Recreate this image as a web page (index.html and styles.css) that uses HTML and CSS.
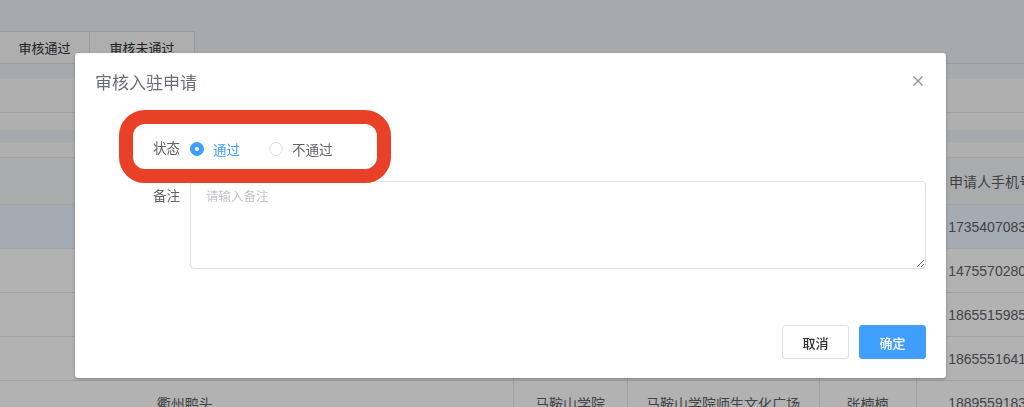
FILE: index.html
```html
<!DOCTYPE html>
<html lang="zh-CN">

<head>
    <meta charset="UTF-8">
    <meta name="viewport" content="width=device-width, initial-scale=1.0">
    <title>审核入驻申请</title>
    <link rel="stylesheet" href="styles.css">
</head>

<body>
    <div class="page">
        <div class="tabs">
            <div class="tab">审核通过</div>
            <div class="tab tab-wide">审核未通过</div>
        </div>

        <div class="filter-panel">
            <div class="filter-row"></div>
            <div class="filter-row filter-row-small"></div>
        </div>

        <div class="table-wrap">
            <table class="data-table">
                <colgroup>
                    <col class="w-name">
                    <col class="w-school">
                    <col class="w-address">
                    <col class="w-person">
                    <col class="w-phone">
                </colgroup>
                <thead>
                    <tr>
                        <th class="col-name"></th>
                        <th></th>
                        <th></th>
                        <th></th>
                        <th>申请人手机号</th>
                    </tr>
                </thead>
                <tbody>
                    <tr class="current-row">
                        <td class="col-name"></td>
                        <td></td>
                        <td></td>
                        <td></td>
                        <td>17354070832</td>
                    </tr>
                    <tr>
                        <td class="col-name"></td>
                        <td></td>
                        <td></td>
                        <td></td>
                        <td>14755702803</td>
                    </tr>
                    <tr>
                        <td class="col-name"></td>
                        <td></td>
                        <td></td>
                        <td></td>
                        <td>18655159859</td>
                    </tr>
                    <tr>
                        <td class="col-name"></td>
                        <td></td>
                        <td></td>
                        <td></td>
                        <td>18655516417</td>
                    </tr>
                    <tr>
                        <td class="col-name">衢州鸭头</td>
                        <td>马鞍山学院</td>
                        <td>马鞍山学院师生文化广场</td>
                        <td>张楠楠</td>
                        <td>18895591831</td>
                    </tr>
                </tbody>
            </table>
        </div>
    </div>

    <!-- dialog -->
    <div class="mask"></div>
    <div class="dialog">
        <div class="dialog-header">
            <span class="dialog-title">审核入驻申请</span>
            <button class="dialog-close" type="button">
                <svg width="10" height="10" viewBox="0 0 10 10">
                    <path d="M0.5 0.5 L9.5 9.5 M9.5 0.5 L0.5 9.5" stroke="#909399" stroke-width="1.3" fill="none" />
                </svg>
            </button>
        </div>

        <div class="dialog-body">
            <div class="form-item">
                <label class="form-label">状态</label>
                <div class="form-content radio-group">
                    <label class="radio is-checked">
                        <span class="radio-inner"></span>
                        <span class="radio-label">通过</span>
                    </label>
                    <label class="radio">
                        <span class="radio-inner"></span>
                        <span class="radio-label">不通过</span>
                    </label>
                </div>
            </div>
            <div class="form-item">
                <label class="form-label">备注</label>
                <div class="form-content">
                    <textarea class="textarea" placeholder="请输入备注"></textarea>
                </div>
            </div>
        </div>

        <div class="dialog-footer">
            <button class="btn" type="button">取消</button>
            <button class="btn btn-primary" type="button">确定</button>
        </div>

        <!-- red highlight drawn on the screenshot -->
        <div class="highlight-mark"></div>
    </div>
</body>

</html>
```

FILE: styles.css
```css
body {
    margin: 0;
    overflow: hidden;
    background-color: #f1f3f7;
    font-family: "Helvetica Neue", "Liberation Sans", "Noto Sans CJK SC", sans-serif;
    color: #606266;
}

.page {
    padding-top: 31px;
}

/* tabs */
.tabs {
    display: flex;
    height: 33px;
    border-bottom: 1px solid #dcdfe6;
    box-sizing: border-box;
}

.tab {
    width: 90px;
    display: flex;
    align-items: center;
    justify-content: center;
    padding-bottom: 1px;
    font-size: 13px;
    color: #303133;
    background-color: #f9f9fb;
    border-right: 1px solid #dcdfe6;
    border-top: 1px solid #dcdfe6;
    box-sizing: border-box;
}

.tab-wide {
    width: 105px;
}

/* filter panel */
.filter-panel {
    margin-top: 15px;
    background-color: #fbfbfb;
}

.filter-row {
    height: 33px;
    border-bottom: 1px solid #e4e7ed;
}

.filter-row-small {
    height: 17px;
    border-bottom: none;
}

/* table */
.table-wrap {
    margin-top: 12px;
    padding-top: 14px;
    background-color: #fbfbfb;
    border-top: 1px solid #f5f5f5;
}

.data-table {
    table-layout: fixed;
    width: 1066px;
    border-collapse: collapse;
    font-size: 14px;
}

.w-name { width: 513px; }
.w-school { width: 114px; }
.w-address { width: 192px; }
.w-person { width: 97px; }
.w-phone { width: 150px; }

.data-table th,
.data-table td {
    text-align: center;
    border-bottom: 1px solid #e4e7ed;
    border-right: 1px solid #e4e7ed;
    white-space: nowrap;
    overflow: hidden;
    padding: 0;
}

.data-table th {
    height: 46px;
    font-weight: normal;
    color: #5a5c60;
    background-color: #f3f5f8;
    border-top: 1px solid #e4e7ed;
}

.data-table td {
    height: 43px;
    background-color: #ffffff;
}

.data-table .col-name {
    padding-right: 143px;
}

.data-table .current-row td {
    background-color: #ecf5ff;
}

/* dialog */
.mask {
    position: fixed;
    top: 0;
    left: 0;
    right: 0;
    bottom: 0;
    background-color: rgba(0, 0, 0, 0.3);
}

.dialog {
    position: absolute;
    left: 75px;
    top: 53px;
    width: 871px;
    height: 325px;
    display: flex;
    flex-direction: column;
    background-color: #ffffff;
    border-radius: 3px;
    box-shadow: 0 1px 3px rgba(0, 0, 0, 0.3);
    box-sizing: border-box;
}

.dialog-header {
    position: relative;
    padding: 19px 20px 10px;
}

.dialog-title {
    display: block;
    font-size: 17px;
    line-height: 24px;
    color: #6a6e75;
}

.dialog-close {
    position: absolute;
    top: 20px;
    right: 20px;
    width: 16px;
    height: 16px;
    padding: 0;
    border: none;
    background: none;
    display: flex;
    align-items: center;
    justify-content: center;
    cursor: pointer;
}

.dialog-body {
    flex: 1;
    padding: 27px 20px 46px;
}

.form-item {
    display: flex;
    margin-bottom: 16px;
}

.form-item:last-child {
    margin-bottom: 0;
}

.form-label {
    width: 95px;
    flex-shrink: 0;
    padding-right: 10px;
    box-sizing: border-box;
    text-align: right;
    font-size: 13.5px;
    line-height: 32px;
    color: #606266;
}

.form-content {
    flex: 1;
}

.radio-group {
    display: flex;
    align-items: center;
    height: 32px;
}

.radio {
    display: flex;
    align-items: center;
    margin-right: 29px;
    font-size: 13.5px;
    color: #606266;
    cursor: pointer;
}

.radio-inner {
    width: 14px;
    height: 14px;
    border: 1px solid #dcdfe6;
    border-radius: 50%;
    box-sizing: border-box;
    background-color: #ffffff;
    position: relative;
}

.radio-label {
    margin-left: 9px;
}

.radio.is-checked .radio-inner {
    border-color: #409eff;
    background-color: #409eff;
}

.radio.is-checked .radio-inner::after {
    content: "";
    position: absolute;
    left: 50%;
    top: 50%;
    width: 4px;
    height: 4px;
    margin: -2px 0 0 -2px;
    border-radius: 50%;
    background-color: #ffffff;
}

.radio.is-checked .radio-label {
    color: #409eff;
}

.textarea {
    display: block;
    width: 100%;
    height: 88px;
    padding: 5px 15px;
    box-sizing: border-box;
    border: 1px solid #dcdfe6;
    border-radius: 4px;
    font-family: inherit;
    font-size: 12.5px;
    line-height: 21px;
    color: #606266;
    resize: vertical;
    outline: none;
}

.textarea::placeholder {
    color: #c0c4cc;
}

.dialog-footer {
    display: flex;
    justify-content: flex-end;
    gap: 10px;
    padding: 10px 20px 19px;
}

.btn {
    width: 67px;
    height: 34px;
    padding: 0;
    border: 1px solid #dcdfe6;
    border-radius: 3px;
    background-color: #ffffff;
    font-family: inherit;
    font-size: 13px;
    font-weight: 500;
    color: #303133;
    cursor: pointer;
}

.btn-primary {
    border-color: #409eff;
    background-color: #409eff;
    color: #ffffff;
}

.highlight-mark {
    position: absolute;
    left: 44px;
    top: 57px;
    width: 272px;
    height: 73px;
    border: 14px solid #e94128;
    border-radius: 26px;
    box-sizing: border-box;
    pointer-events: none;
}
```
